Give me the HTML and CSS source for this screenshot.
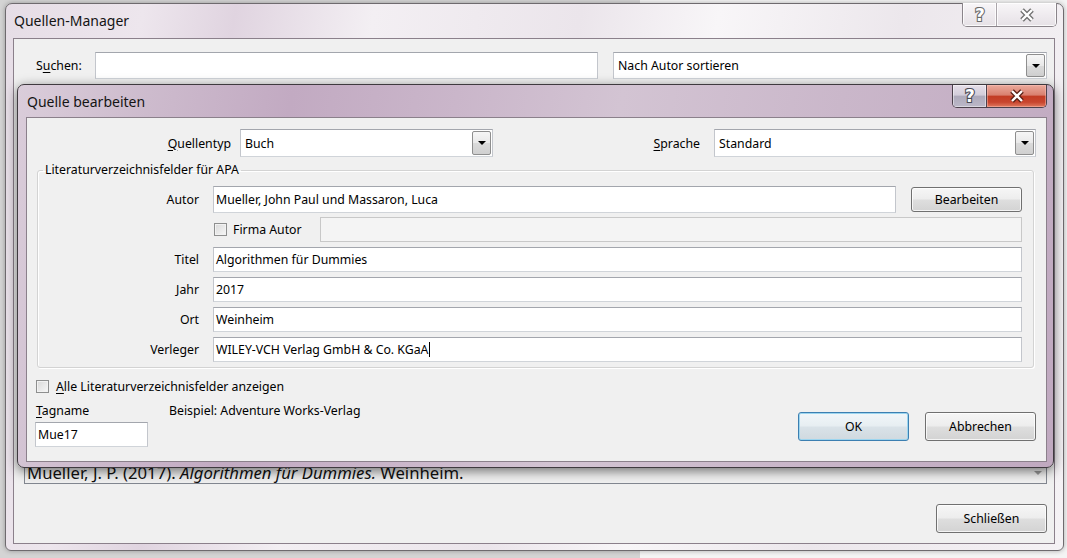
FILE: index.html
```html
<!DOCTYPE html>
<html lang="de">
<head>
<meta charset="utf-8">
<title>Quelle bearbeiten</title>
<link rel="stylesheet" href="styles.css">
</head>
<body>
<div class="desktop">
  <section class="window manager">
    <header class="titlebar">
      <span class="title">Quellen-Manager</span>
      <div class="caption inactive">
        <span class="cap-btn cap-help"><svg class="cap-icon" width="20" height="20" viewBox="0 0 20 20"><text class="qmark" x="10" y="16" text-anchor="middle">?</text></svg></span>
        <span class="cap-btn cap-close"><svg class="cap-icon" width="18" height="14" viewBox="0 0 18 14"><path class="x-out" d="M4 2 L14 12 M14 2 L4 12"/><path class="x-in" d="M4 2 L14 12 M14 2 L4 12"/></svg></span>
      </div>
    </header>
    <div class="client manager-client">
      <div class="search-row">
        <span class="search-label">S<u>u</u>chen:</span>
        <div class="textbox search-box"></div>
        <div class="combo sort-combo"><span class="combo-value">Nach Autor sortieren</span><span class="combo-arrow"></span></div>
      </div>
      <div class="source-lists"></div>
      <div class="preview">
        <div class="preview-text">Mueller, J. P. (2017). <i>Algorithmen für Dummies.</i> Weinheim.</div>
        <div class="preview-scroll"><span class="scroll-arrow"></span></div>
      </div>
      <div class="manager-footer"><button class="btn">Schließen</button></div>
    </div>
  </section>

  <section class="window editor">
    <header class="titlebar editor-titlebar">
      <span class="title">Quelle bearbeiten</span>
      <div class="caption active">
        <span class="cap-btn cap-help"><svg class="cap-icon" width="20" height="20" viewBox="0 0 20 20"><text class="qmark" x="10" y="16" text-anchor="middle">?</text></svg></span>
        <span class="cap-btn cap-close"><svg class="cap-icon" width="18" height="14" viewBox="0 0 18 14"><path class="x-out" d="M4 2 L14 12 M14 2 L4 12"/><path class="x-in" d="M4 2 L14 12 M14 2 L4 12"/></svg></span>
      </div>
    </header>
    <div class="client editor-client">
      <div class="type-row">
        <span class="type-label"><u>Q</u>uellentyp</span>
        <div class="combo type-combo"><span class="combo-value">Buch</span><span class="combo-arrow"></span></div>
        <span class="lang-label"><u>S</u>prache</span>
        <div class="combo lang-combo"><span class="combo-value">Standard</span><span class="combo-arrow"></span></div>
      </div>
      <fieldset class="group">
        <legend>Literaturverzeichnisfelder für APA</legend>
        <div class="field-row row-autor">
          <span class="field-label">Autor</span>
          <div class="field-body">
            <div class="textbox">Mueller, John Paul und Massaron, Luca</div>
            <button class="btn edit-btn">Bearbeiten</button>
          </div>
        </div>
        <div class="field-row row-firma">
          <span class="field-label"></span>
          <div class="field-body">
            <span class="checkbox firma-check"></span><span class="check-text">Firma Autor</span>
            <div class="textbox disabled"></div>
          </div>
        </div>
        <div class="field-row">
          <span class="field-label">Titel</span>
          <div class="field-body"><div class="textbox">Algorithmen für Dummies</div></div>
        </div>
        <div class="field-row">
          <span class="field-label">Jahr</span>
          <div class="field-body"><div class="textbox">2017</div></div>
        </div>
        <div class="field-row">
          <span class="field-label">Ort</span>
          <div class="field-body"><div class="textbox">Weinheim</div></div>
        </div>
        <div class="field-row">
          <span class="field-label">Verleger</span>
          <div class="field-body"><div class="textbox">WILEY-VCH Verlag GmbH &amp; Co. KGaA<span class="caret"></span></div></div>
        </div>
      </fieldset>
      <div class="show-all"><span class="checkbox"></span><span><u>A</u>lle Literaturverzeichnisfelder anzeigen</span></div>
      <div class="bottom-row">
        <div class="tag-col">
          <span class="tag-label"><u>T</u>agname</span>
          <div class="textbox tag-box">Mue17</div>
        </div>
        <span class="example">Beispiel: Adventure Works-Verlag</span>
        <div class="dialog-buttons">
          <button class="btn default">OK</button>
          <button class="btn">Abbrechen</button>
        </div>
      </div>
    </div>
  </section>
</div>
</body>
</html>
```

FILE: styles.css
```css
* { box-sizing: border-box; }
html, body { margin: 0; padding: 0; }
body {
  width: 1067px;
  height: 558px;
  overflow: hidden;
  font-family: "Noto Sans", "Open Sans", "DejaVu Sans", sans-serif;
  font-size: 12.3px;
  color: #000;
  background: linear-gradient(to right, #d4d4d4 0, #d4d4d4 640px, #f4f4f4 640px, #f4f4f4 100%);
}
u { text-decoration: underline; text-underline-offset: 2px; }

.desktop {
  position: relative;
  width: 1067px;
  height: 558px;
  padding: 3px 0 0 5px;
}

/* ---------- windows ---------- */
.window {
  border: 1px solid #6e6a6e;
  display: flex;
  flex-direction: column;
}
.manager {
  width: 1059px;
  height: 548px;
  border-radius: 7px 7px 6px 6px;
  background: linear-gradient(100deg, #e6dde6 0%, #ede6ed 12%, #e0d4e0 20%, #f3eff3 32%, #ebe5eb 50%, #f8f6f8 62%, #ece7ec 78%, #f5f2f5 100%);
  box-shadow: 0 0 5px rgba(0, 0, 0, .3);
}
.editor {
  position: absolute;
  left: 17px;
  top: 84px;
  width: 1037px;
  height: 384px;
  border-radius: 7px;
  border-color: #3f3a3f;
  background: linear-gradient(100deg, #dacdda 0%, #cdbbcd 12%, #c2aac2 25%, #cab6ca 40%, #d3c4d3 55%, #cab7ca 75%, #c0a9c0 100%);
  box-shadow: 0 3px 12px rgba(0, 0, 0, .55);
}

.titlebar {
  position: relative;
  display: flex;
  align-items: center;
  flex: none;
}
.manager .titlebar { height: 34px; padding-left: 8px; }
.editor-titlebar { height: 32px; padding-left: 9px; padding-top: 2px; }
.title { font-size: 14px; line-height: 20px; color: #141414; }

/* caption buttons */
.caption {
  position: absolute;
  display: flex;
  border: 1px solid #8a848a;
  border-top: none;
  border-radius: 0 0 5px 5px;
  overflow: hidden;
}
.manager .caption { top: -1px; right: 6px; height: 24px; }
.editor .caption { top: 0; right: 6px; height: 23px; border-color: #4c414c; }
.cap-btn {
  display: flex;
  align-items: center;
  justify-content: center;
}
.inactive .cap-btn {
  background: linear-gradient(#f8f6f8, #eeeaee 55%, #e6e1e6);
  box-shadow: inset 0 0 0 1px rgba(255, 255, 255, .8);
}
.inactive .cap-help { width: 34px; border-right: 1px solid #aaa4aa; }
.inactive .cap-close { width: 59px; }
.active .cap-help {
  width: 34px;
  border-right: 1px solid #4c414c;
  background: linear-gradient(#e6dfe9 0%, #d3cdda 45%, #aeaabb 52%, #bcb8c8 100%);
  box-shadow: inset 0 0 0 1px rgba(255, 255, 255, .45);
}
.active .cap-close {
  width: 59px;
  background: linear-gradient(#ebaa9c 0%, #d9806f 45%, #c23c24 52%, #c8452e 78%, #e07a60 100%);
  box-shadow: inset 0 0 0 1px rgba(255, 200, 190, .45);
}
.cap-icon { display: block; }
.qmark {
  font-family: "DejaVu Sans", sans-serif;
  font-size: 17px;
  font-weight: 700;
  fill: #fff;
  stroke: #6a6a6a;
  stroke-width: 2.2px;
  paint-order: stroke;
}
.active .qmark { stroke: #4a4a55; }
.x-out { stroke: #727272; stroke-width: 5px; fill: none; }
.x-in { stroke: #fff; stroke-width: 2.4px; fill: none; }
.active .x-out { stroke: #5a1f14; }

/* client areas */
.client {
  flex: 1;
  display: flex;
  flex-direction: column;
  background: #f0f0f0;
  border: 1px solid #8b808b;
  min-height: 0;
}
.manager-client { margin: 0 8px 6px 7px; }
.editor-client { margin: 0 6px 5px 8px; }

/* ---------- common controls ---------- */
.textbox {
  background: #fff;
  border: 1px solid;
  border-color: #a3a6ad #c3c6cc #d0d4d9 #c3c6cc;
  display: flex;
  align-items: center;
  padding-left: 2px;
  white-space: nowrap;
  overflow: hidden;
}
.textbox.disabled { background: #f4f4f4; border-color: #c8c8c8; }
.caret { display: inline-block; width: 1px; height: 15px; background: #000; margin-left: 1px; }

.combo {
  display: flex;
  align-items: stretch;
  background: #fff;
  border: 1px solid;
  border-color: #a3a6ad #c3c6cc #d0d4d9 #c3c6cc;
  padding: 1px;
}
.combo-value { flex: 1; display: flex; align-items: center; padding-left: 3px; }
.combo-arrow {
  width: 19px;
  display: flex;
  align-items: center;
  justify-content: center;
  border: 1px solid #8e8e8e;
  border-radius: 2px;
  background: linear-gradient(#f6f6f6, #e9e9e9 50%, #dadada 52%, #d0d0d0);
}
.combo-arrow::after {
  content: "";
  width: 0;
  height: 0;
  border-left: 4px solid transparent;
  border-right: 4px solid transparent;
  border-top: 4px solid #000;
}

.btn {
  font: inherit;
  color: #000;
  width: 111px;
  height: 29px;
  padding: 0;
  border: 1px solid #707070;
  border-radius: 3px;
  background: linear-gradient(#f6f6f6 0%, #ededed 48%, #dedede 52%, #d3d3d3 100%);
  box-shadow: inset 0 0 0 1px rgba(255, 255, 255, .75);
}
.btn.default {
  border-color: #3c7fb1;
  box-shadow: inset 0 0 0 1px #9cd5ef;
  background: linear-gradient(#f1f6f9 0%, #e7eef2 48%, #d9e2e8 52%, #d0d9df 100%);
}

.checkbox {
  flex: none;
  width: 13px;
  height: 13px;
  border: 1px solid #8e8f8f;
  background: linear-gradient(135deg, #d9d9d9, #f7f7f7);
  box-shadow: inset 0 0 0 1px #f2f2f2;
}

/* ---------- Quellen-Manager ---------- */
.search-row {
  display: flex;
  align-items: center;
  height: 27px;
  margin-top: 13px;
  padding-right: 7px;
  flex: none;
}
.search-label { width: 59px; margin-left: 22px; }
.search-box { width: 503px; height: 27px; }
.sort-combo { width: 434px; height: 27px; margin-left: 15px; }
.source-lists { flex: 1; }
.preview {
  flex: none;
  height: 60px;
  margin: 0 7px 0 10px;
  border: 1px solid #828790;
  display: flex;
  align-items: flex-end;
}
.preview-text {
  flex: 1;
  font-size: 16.7px;
  line-height: 19px;
  padding-left: 2px;
  padding-bottom: 1px;
  color: #111;
  white-space: nowrap;
}
.preview-scroll {
  width: 17px;
  align-self: stretch;
  display: flex;
  align-items: flex-end;
  justify-content: center;
  padding-bottom: 8px;
}
.scroll-arrow {
  width: 0;
  height: 0;
  border-left: 4px solid transparent;
  border-right: 4px solid transparent;
  border-top: 4px solid #9a9a9a;
}
.manager-footer {
  flex: none;
  display: flex;
  justify-content: flex-end;
  padding: 20px 7px 10px 0;
}

/* ---------- Quelle bearbeiten ---------- */
.type-row {
  display: flex;
  align-items: center;
  height: 28px;
  margin-top: 11px;
  padding-right: 10px;
  flex: none;
}
.type-label { width: 204px; text-align: right; }
.type-combo { width: 253px; height: 28px; margin-left: 9px; }
.lang-label { flex: 1; text-align: right; }
.lang-combo { width: 322px; height: 28px; margin-left: 14px; }

.group {
  margin: 5px 12px 0 10px;
  padding: 0 11px 5px 0;
  border: 1px solid #d3d3d3;
  border-radius: 3px;
  min-width: 0;
  box-shadow: inset 1px 1px 0 #fff, 1px 1px 0 #fff;
  flex: none;
}
.group legend { margin-left: 5px; padding: 0 2px; line-height: 16px; }

.field-row {
  display: grid;
  grid-template-columns: 161px 1fr;
  column-gap: 14px;
  align-items: center;
  height: 25px;
  margin-top: 5px;
}
.row-autor { height: 27px; margin-top: 8px; }
.row-firma { margin-top: 4px; }
.field-label { text-align: right; }
.field-body { display: flex; align-items: center; height: 100%; }
.field-body .textbox { flex: 1; height: 100%; }
.edit-btn { height: 25px; margin-left: 15px; }
.firma-check { margin-left: 1px; margin-right: 6px; }
.check-text { width: 87px; }

.show-all {
  display: flex;
  align-items: center;
  height: 14px;
  margin-top: 11px;
  padding-left: 9px;
  flex: none;
}
.show-all .checkbox { margin-right: 7px; }

.bottom-row {
  display: flex;
  align-items: flex-start;
  margin-top: 10px;
  padding: 0 10px 0 8px;
  flex: none;
}
.tag-col { width: 113px; display: flex; flex-direction: column; }
.tag-label { line-height: 16px; padding-left: 1px; }
.tag-box { height: 25px; margin-top: 3px; }
.example { line-height: 16px; margin-left: 21px; }
.dialog-buttons { margin-left: auto; margin-top: 9px; display: flex; gap: 16px; }
```
